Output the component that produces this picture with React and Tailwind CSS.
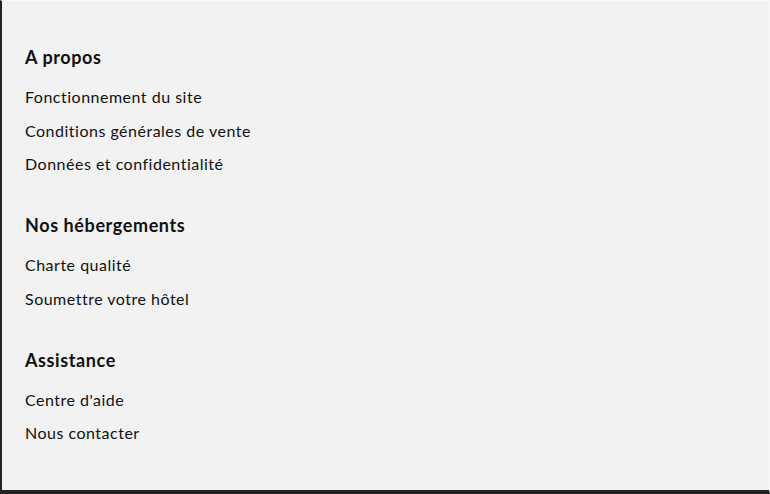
export default function App() {
  const sections = [
    { title: "A propos", links: ["Fonctionnement du site", "Conditions générales de vente", "Données et confidentialité"] },
    { title: "Nos hébergements", links: ["Charte qualité", "Soumettre votre hôtel"] },
    { title: "Assistance", links: ["Centre d'aide", "Nous contacter"] },
  ];
  return (
    <div
      className="w-[770px] h-[494px] bg-[#f2f2f2] border-l-2 border-b-4 border-t border-r border-l-[#222] border-b-[#222] border-t-[#f8f8f8] border-r-[#f8f8f8] pl-[23px] pt-[44px] text-[#111]"
      style={{ fontFamily: "Lato, 'Open Sans', sans-serif", fontVariantLigatures: "none" }}
    >
      <div className="flex flex-col gap-[32.25px]">
        {sections.map((s) => (
          <div key={s.title} className="flex flex-col">
            <h3 className="text-[18px] font-bold leading-[24px] tracking-[0.6px] mb-[11.25px]">{s.title}</h3>
            {s.links.map((l) => (
              <a key={l} className="text-[16px] leading-[33.5px] h-[33.5px] tracking-[0.5px] block">{l}</a>
            ))}
          </div>
        ))}
      </div>
    </div>
  );
}
